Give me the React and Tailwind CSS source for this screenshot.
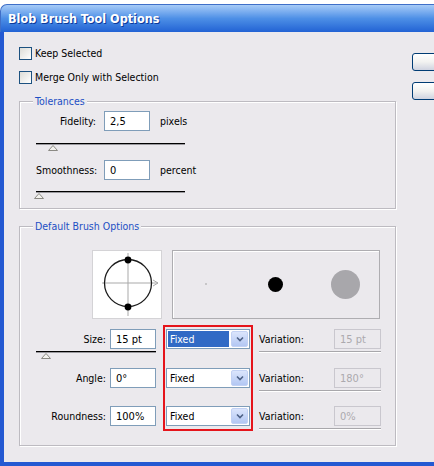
import React from 'react';

const ui = "font-['DejaVu_Sans_Condensed','Liberation_Sans',sans-serif] text-[10px] leading-none text-black";

const Checkbox = ({ label }) => (
  <div className="flex items-center h-[13px]">
    <span className="w-[13px] h-[13px] shrink-0 border border-[#1c5180] bg-linear-to-br from-[#dcdcd7] to-white" />
    <span className="ml-[3px] text-[10.5px]">{label}</span>
  </div>
);

const GroupBox = ({ title, className, children }) => (
  <div className={`relative border border-[#bdbbc1] shadow-[inset_1px_1px_0_#fff,1px_1px_0_#fff] ${className}`}>
    <span className="absolute left-[13px] top-[-7px] px-[2px] bg-[#ebe9ed] leading-[13px] text-[10.5px] text-[#1d4fc4]">{title}</span>
    {children}
  </div>
);

const TextInput = ({ value, width = 'w-[46px]', disabled }) => (
  <div
    className={`${width} h-[20px] shrink-0 flex items-center pl-[5px] border text-[11px] ${
      disabled ? 'border-[#c9c7ce] text-[#aca9ae] bg-[#ebe9ed]' : 'border-[#7f9db9] bg-white'
    }`}
  >
    {value}
  </div>
);

const Thumb = () => (
  <svg width="10" height="6" viewBox="0 0 10 6" className="block">
    <polygon points="5,0.5 9.5,5.5 0.5,5.5" fill="#f3f2ee" stroke="#8b8a84" strokeWidth="1" />
  </svg>
);

const Slider = ({ width, thumb, className }) => (
  <div className={className}>
    <div className={`${width} h-[2px] border-t border-black border-b border-b-[#9a999e]`} />
    <div className={thumb}>
      <Thumb />
    </div>
  </div>
);

const Select = ({ selected, className }) => (
  <div className={`w-[84px] h-[20px] ml-[1px] flex items-center bg-white border border-[#7f9db9] p-px ${className}`}>
    <div className={`flex-1 h-full flex items-center pl-[2px] text-[10.5px] ${selected ? 'bg-[#316ac5] text-white' : ''}`}>Fixed</div>
    <div className="w-[17px] h-full ml-[2px] rounded-[2px] bg-linear-to-b from-[#dbe5fc] to-[#b3c7f3] border border-[#c2d1f4] flex items-center justify-center">
      <svg width="8" height="6" viewBox="0 0 8 6">
        <path d="M1 1.5 L4 4.5 L7 1.5" fill="none" stroke="#4d6185" strokeWidth="1.6" />
      </svg>
    </div>
  </div>
);

const Variation = ({ value, className }) => (
  <div className={className}>
    <div className="flex items-center h-[20px]">
      <span className="text-[10.5px]">Variation:</span>
      <div className="ml-auto">
        <TextInput value={value} width="w-[47px]" disabled />
      </div>
    </div>
    <div className="mt-[2px] h-[2px] border-t border-[#a8a7ab] border-b border-b-white" />
  </div>
);

const Row = ({ label, value, className }) => (
  <div className={`flex items-center h-[20px] ${className}`}>
    <span className="ml-[16px] w-[70px] text-right text-[10.5px]">{label}</span>
    <div className="ml-[4px]">
      <TextInput value={value} />
    </div>
  </div>
);

const WinButton = ({ className }) => (
  <div className={`w-[75px] h-[18px] rounded-[3px] border border-[#003c74] bg-linear-to-b from-white via-[#f2f2f0] to-[#cfd3e0] ${className}`} />
);

export default function App() {
  return (
    <div className={`w-[434px] h-[466px] overflow-hidden bg-white ${ui}`}>
      <div className="w-[500px] h-[466px] flex flex-col pt-[4px]">
        <div className="h-[28px] shrink-0 rounded-tl-[7px] border-t border-l border-[#3f6fc8] bg-linear-to-b from-[#a6cbf7] via-[#4d8fe6] to-[#2262d4] flex items-center pl-[7px] pt-[2px]">
          <span className="font-['DejaVu_Sans_Condensed',sans-serif] font-bold text-[12.5px] text-white [text-shadow:1px_1px_0_#0b3a9c]">
            Blob Brush Tool Options
          </span>
        </div>

        <div className="flex-1 flex bg-[#ebe9ed] border-l-[4px] border-b-[4px] border-[#2459d2]">
          <div className="w-[392px] shrink-0 pl-[15px] pt-[15px]">
            <Checkbox label="Keep Selected" />
            <div className="mt-[11px]">
              <Checkbox label="Merge Only with Selection" />
            </div>

            <GroupBox title="Tolerances" className="mt-[17px] w-[377px] pt-[9px] pb-[9px]">
              <div className="flex items-center h-[20px] text-[10.5px]">
                <span className="ml-[16px] w-[60px] text-right">Fidelity:</span>
                <div className="ml-[8px]">
                  <TextInput value="2,5" />
                </div>
                <span className="ml-[10px]">pixels</span>
              </div>
              <Slider className="mt-[12px] ml-[16px]" width="w-[149px]" thumb="ml-[12px]" />
              <div className="flex items-center h-[20px] mt-[9px] text-[10.5px]">
                <span className="ml-[16px] w-[60px] text-right">Smoothness:</span>
                <div className="ml-[8px]">
                  <TextInput value="0" />
                </div>
                <span className="ml-[10px]">percent</span>
              </div>
              <Slider className="mt-[11px] ml-[16px]" width="w-[149px]" thumb="ml-[-2px]" />
            </GroupBox>

            <GroupBox title="Default Brush Options" className="mt-[17px] w-[377px] pt-[23px] pb-[14px]">
              <div className="flex ml-[72px] h-[69px]">
                <div className="w-[70px] h-[69px] bg-white border border-[#d4d3d6]">
                  <svg width="68" height="67" viewBox="1 1 68 67" className="block">
                    <line x1="10" y1="33" x2="66" y2="33" stroke="#a9a9a9" strokeWidth="1" />
                    <path d="M61 30 L66 33 L61 36" fill="none" stroke="#a9a9a9" strokeWidth="1" />
                    <line x1="36" y1="3" x2="36" y2="66" stroke="#a9a9a9" strokeWidth="1" />
                    <circle cx="36" cy="33" r="23.5" fill="none" stroke="#1a1a1a" strokeWidth="1.3" />
                    <circle cx="36" cy="10" r="3.4" fill="#000" />
                    <circle cx="36" cy="57" r="3.4" fill="#000" />
                  </svg>
                </div>
                <div className="ml-[10px] w-[208px] h-[69px] border border-[#aeadb1] shadow-[inset_1px_1px_0_#fff]">
                  <svg width="206" height="67" viewBox="1 1 206 67" className="block">
                    <circle cx="34" cy="34" r="0.8" fill="#9a9a9a" />
                    <circle cx="103.5" cy="34.5" r="7.5" fill="#000" />
                    <circle cx="173.5" cy="34.5" r="14.5" fill="#a8a7ab" />
                  </svg>
                </div>
              </div>

              <div className="flex items-start mt-[6px]">
                <div className="w-[136px] shrink-0 pt-[4px]">
                  <Row label="Size:" value="15 pt" />
                  <Slider className="mt-[2px] ml-[16px]" width="w-[120px]" thumb="ml-[5px]" />
                  <Row label="Angle:" value="0°" className="mt-[9px]" />
                  <Row label="Roundness:" value="100%" className="mt-[18px]" />
                </div>

                <div className="ml-[7px] w-[90px] shrink-0 border-2 border-[#e5141b] pt-[2px] pb-[3px]">
                  <Select selected />
                  <Select className="mt-[19px]" />
                  <Select className="mt-[18px]" />
                </div>

                <div className="ml-[6px] w-[122px] shrink-0 pt-[4px]">
                  <Variation value="15 pt" />
                  <Variation value="180°" className="mt-[15px]" />
                  <Variation value="0%" className="mt-[14px]" />
                </div>
              </div>
            </GroupBox>
          </div>

          <div className="ml-[16px] pt-[21px] flex flex-col gap-[11px]">
            <WinButton />
            <WinButton />
          </div>
        </div>
      </div>
    </div>
  );
}
